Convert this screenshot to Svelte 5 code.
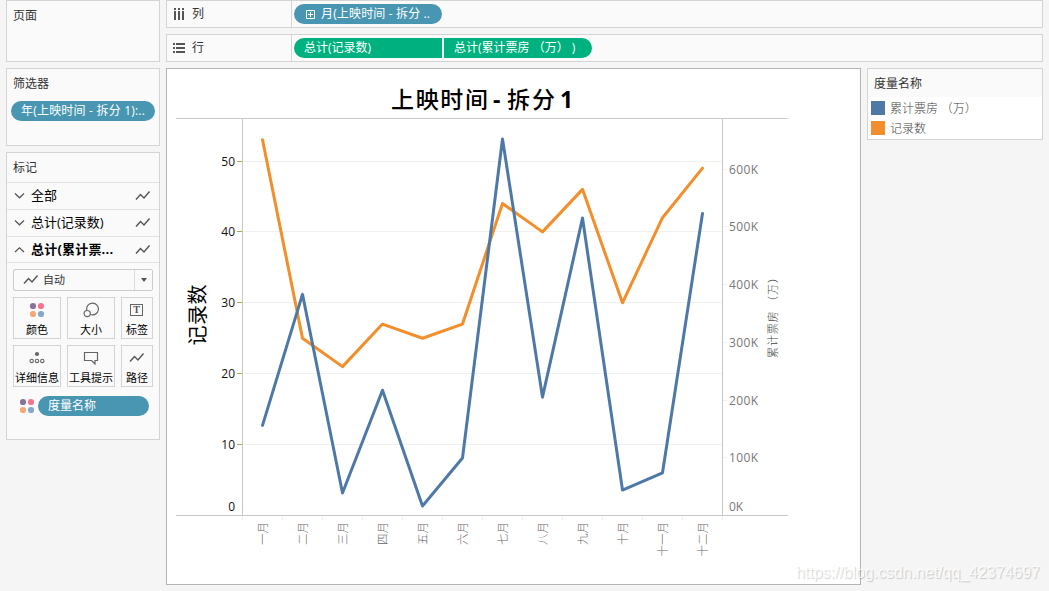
<script>
  // Palette
  const BLUE = '#4e79a7';
  const ORANGE = '#f28e2b';

  const MARKS = [
    { label: '全部', open: false },
    { label: '总计(记录数)', open: false },
    { label: '总计(累计票...', open: true },
  ];

  const BUTTONS = [
    { label: '颜色', icon: 'color' },
    { label: '大小', icon: 'size' },
    { label: '标签', icon: 'label' },
    { label: '详细信息', icon: 'detail' },
    { label: '工具提示', icon: 'tooltip' },
    { label: '路径', icon: 'path' },
  ];

  const LEGEND = [
    { label: '累计票房 （万）', color: BLUE },
    { label: '记录数', color: ORANGE },
  ];

  const DATA = [
    { month: '一月', count: 53, gross: 156 },
    { month: '二月', count: 25, gross: 383 },
    { month: '三月', count: 21, gross: 39 },
    { month: '四月', count: 27, gross: 217 },
    { month: '五月', count: 25, gross: 16.5 },
    { month: '六月', count: 27, gross: 99.5 },
    { month: '七月', count: 44, gross: 652 },
    { month: '八月', count: 40, gross: 205 },
    { month: '九月', count: 46, gross: 515 },
    { month: '十月', count: 30, gross: 44 },
    { month: '十一月', count: 42, gross: 74 },
    { month: '十二月', count: 49, gross: 523 },
  ];

  // Chart geometry, inside the 693x515 view
  const LEFT = 75.5;
  const RIGHT = 555.5;
  const TOP = 49.5;
  const BASE = 446.5;
  const STEP = 40;

  const x = (i) => LEFT + STEP / 2 + i * STEP;
  const yCount = (v) => BASE - v * 7.09;
  const yGross = (v) => BASE - v * 0.5775;
  const snap = (v) => Math.floor(v) + 0.5;

  const countLine = DATA.map((d, i) => `${x(i)},${yCount(d.count)}`).join(' ');
  const grossLine = DATA.map((d, i) => `${x(i)},${yGross(d.gross)}`).join(' ');
  const countTicks = [10, 20, 30, 40, 50];
  const grossTicks = [100, 200, 300, 400, 500, 600];
</script>

{#snippet zigzag()}
  <svg class="zigzag" width="16" height="12" viewBox="0 0 16 12">
    <path d="M1 9.5 L5.5 4.5 L9 8 L14.5 1.5" fill="none" stroke="#555" stroke-width="1.4" />
  </svg>
{/snippet}

{#snippet dots()}
  <svg width="16" height="16" viewBox="0 0 16 16">
    <circle cx="4" cy="4" r="3.1" fill="#8a7199" />
    <circle cx="12" cy="4" r="3.1" fill="#f9748a" />
    <circle cx="4" cy="12" r="3.1" fill="#f7a777" />
    <circle cx="12" cy="12" r="3.1" fill="#84a7cf" />
  </svg>
{/snippet}

<div class="workspace">
  <aside class="side">
    <section class="card pages">
      <h3>页面</h3>
    </section>

    <section class="card filters">
      <h3>筛选器</h3>
      <div class="pill blue filter-pill">年(上映时间 - 拆分 1):..</div>
    </section>

    <section class="card marks">
      <h3>标记</h3>
      {#each MARKS as mark}
        <div class="mark-row" class:open={mark.open}>
          <svg class="chevron" width="12" height="8" viewBox="0 0 12 8">
            <path d={mark.open ? 'M1 6 L5.5 1.8 L10 6' : 'M1 1.5 L5.5 5.8 L10 1.5'} fill="none" stroke="#555" stroke-width="1.2" />
          </svg>
          <span>{mark.label}</span>
          {@render zigzag()}
        </div>
      {/each}

      <div class="marks-body">
        <div class="select">
          {@render zigzag()}
          <span>自动</span>
          <div class="arrow"><i></i></div>
        </div>

        <div class="buttons">
          {#each BUTTONS as button}
            <div class="button">
              <div class="icon">
                {#if button.icon === 'color'}
                  {@render dots()}
                {:else if button.icon === 'size'}
                  <svg width="16" height="16" viewBox="0 0 16 16" fill="none" stroke="#666" stroke-width="1.2">
                    <path d="M3.8 8.4 A5.9 5.9 0 1 1 7.4 12.5" />
                    <circle cx="4.2" cy="11.6" r="3.1" />
                  </svg>
                {:else if button.icon === 'label'}
                  <svg width="14" height="14" viewBox="0 0 14 14">
                    <rect x="0.5" y="1.5" width="12" height="11" fill="none" stroke="#666" />
                    <text x="6.5" y="10.4" text-anchor="middle" class="icon-t">T</text>
                  </svg>
                {:else if button.icon === 'detail'}
                  <svg width="16" height="14" viewBox="0 0 16 14" fill="none" stroke="#666" stroke-width="1.1">
                    <circle cx="8" cy="3" r="2.1" fill="#666" stroke="none" />
                    <circle cx="2.7" cy="9.9" r="1.7" />
                    <circle cx="8" cy="9.9" r="1.7" />
                    <circle cx="13.3" cy="9.9" r="1.7" />
                  </svg>
                {:else if button.icon === 'tooltip'}
                  <svg width="16" height="14" viewBox="0 0 16 14">
                    <path d="M1.5 1.5 H14.5 V9.5 H12 V13 L8.5 9.5 H1.5 Z" fill="none" stroke="#666" stroke-width="1.2" />
                  </svg>
                {:else}
                  {@render zigzag()}
                {/if}
              </div>
              <span>{button.label}</span>
            </div>
          {/each}
        </div>

        <div class="encoding">
          {@render dots()}
          <div class="pill blue">度量名称</div>
        </div>
      </div>
    </section>
  </aside>

  <main class="content">
    <div class="card shelf">
      <div class="shelf-name">
        <svg width="12" height="14" viewBox="0 0 12 14" fill="#555">
          {#each [1, 5, 9] as cx}
            <rect x={cx} y="1" width="2" height="2" />
            <rect x={cx} y="4" width="2" height="9" />
          {/each}
        </svg>
        <span>列</span>
      </div>
      <div class="shelf-pills">
        <div class="pill blue">
          <svg width="9" height="9" viewBox="0 0 9 9" fill="none" stroke="#fff">
            <path d="M0.5 0.5 H8.5 V8.5 H0.5 Z M2 4.5 H7 M4.5 2 V7" />
          </svg>
          <span>月(上映时间 - 拆分 ..</span>
        </div>
      </div>
    </div>

    <div class="card shelf">
      <div class="shelf-name">
        <svg width="12" height="14" viewBox="0 0 12 14" fill="#555">
          {#each [2, 6, 10] as cy}
            <rect x="0" y={cy} width="2" height="2" />
            <rect x="3" y={cy} width="9" height="2" />
          {/each}
        </svg>
        <span>行</span>
      </div>
      <div class="shelf-pills">
        <div class="pill green first">总计(记录数)</div>
        <div class="pill green last">总计(累计票房 （万）<span>)</span></div>
      </div>
    </div>

    <div class="lower">
      <div class="chart">
        <svg width="693" height="515" viewBox="0 0 693 515">
          <text class="title" y="39">
            <tspan x="224" textLength="97">上映时间</tspan>
            <tspan x="326" class="latin">-</tspan>
            <tspan x="340" textLength="48">拆分</tspan>
            <tspan x="393" class="latin">1</tspan>
          </text>

          {#each countTicks as t}
            <line class="grid" x1={LEFT} x2={RIGHT} y1={snap(yCount(t))} y2={snap(yCount(t))} />
            <line class="tick" x1="70" x2="75" y1={snap(yCount(t))} y2={snap(yCount(t))} />
            <text class="count" x="68" y={snap(yCount(t)) + 4.5}>{t}</text>
          {/each}
          <text class="count" x="68" y="442">0</text>

          {#each grossTicks as t}
            <line class="grid" x1={RIGHT} x2="560" y1={snap(yGross(t))} y2={snap(yGross(t))} />
            <text class="gross" x="562" y={snap(yGross(t)) + 4.5} textLength="29">{t}K</text>
          {/each}
          <text class="gross" x="562" y="442">0K</text>

          {#each Array(13) as _, i}
            <line class="grid" x1={LEFT + i * STEP} x2={LEFT + i * STEP} y1="447" y2="451" />
          {/each}

          <line class="axis" x1="9" x2="621" y1={TOP} y2={TOP} />
          <line class="axis" x1="9" x2="621" y1={BASE} y2={BASE} />
          <line class="axis" x1={LEFT} x2={LEFT} y1={TOP} y2={BASE} />
          <line class="axis" x1={RIGHT} x2={RIGHT} y1={TOP} y2={BASE} />

          <polyline class="series" points={countLine} stroke={ORANGE} />
          <polyline class="series" points={grossLine} stroke={BLUE} />

          {#each DATA as d, i}
            <text class="month" transform="translate({x(i) + 4} 453) rotate(-90)">{d.month}</text>
          {/each}

          <text class="count-title" transform="translate(38 276.5) rotate(-90)" textLength="61">记录数</text>
          <text class="gross-title" transform="translate(610 289) rotate(-90)" textLength="86">累计票房 （万）</text>
        </svg>
      </div>

      <section class="card legend">
        <h3>度量名称</h3>
        <ul>
          {#each LEGEND as item}
            <li>
              <i style:background={item.color}></i>
              <span>{item.label}</span>
            </li>
          {/each}
        </ul>
      </section>
    </div>
  </main>

  <div class="watermark">https://blog.csdn.net/qq_42374697</div>
</div>

<style>
  :global(body) {
    background: #f5f5f5;
    overflow: hidden;
  }

  .workspace {
    position: relative;
    box-sizing: border-box;
    width: 1049px;
    height: 591px;
    padding: 0 6px;
    display: flex;
    gap: 6px;
    background: #f5f5f5;
    color: #333;
    font-family: "Open Sans", "Noto Sans CJK SC", sans-serif;
    font-size: 12px;
    line-height: 18px;
  }

  .workspace * {
    box-sizing: border-box;
  }

  svg {
    display: block;
    flex: none;
  }

  .side {
    width: 154px;
    display: flex;
    flex-direction: column;
    gap: 6px;
    flex: none;
  }

  .card {
    background: #fafafa;
    border: 1px solid #d4d4d4;
  }

  h3 {
    margin: 0;
    padding: 6px 6px 0;
    font-size: 12px;
    font-weight: 400;
    line-height: 18px;
  }

  .pages {
    height: 62px;
  }

  .filters {
    height: 78px;
  }

  .marks {
    height: 288px;
  }

  .marks h3 {
    height: 29px;
  }

  .pill {
    display: flex;
    align-items: center;
    height: 20px;
    padding: 0 10px 1px;
    border-radius: 10px;
    color: #fff;
    font-size: 12px;
    white-space: nowrap;
    overflow: hidden;
  }

  .blue {
    background: #4996b2;
  }

  .green {
    background: #00b180;
  }

  .filter-pill {
    width: 144px;
    margin: 8px 0 0 4px;
    letter-spacing: 0.2px;
  }

  .mark-row {
    display: flex;
    align-items: center;
    height: 27px;
    padding: 0 8px 0 7px;
    border-top: 1px solid #e2e2e2;
    color: #000;
    font-size: 13px;
  }

  .mark-row.open {
    border-bottom: 1px solid #e2e2e2;
    font-weight: 700;
  }

  .mark-row span {
    flex: 1;
    margin-left: 5px;
    padding-bottom: 2px;
    white-space: nowrap;
  }

  .mark-row.open span {
    letter-spacing: 0.2px;
  }

  .marks-body {
    padding: 6px 6px 0;
  }

  .select {
    display: flex;
    align-items: center;
    height: 22px;
    padding-left: 9px;
    border: 1px solid #ccc;
    border-radius: 2px;
    font-size: 11px;
  }

  .select span {
    flex: 1;
    margin-left: 4px;
  }

  .arrow {
    display: flex;
    align-items: center;
    justify-content: center;
    width: 18px;
    height: 20px;
    border-left: 1px solid #ddd;
  }

  .arrow i {
    border: 3.5px solid transparent;
    border-top: 4px solid #555;
    border-bottom: 0;
  }

  .buttons {
    display: grid;
    grid-template-columns: 48px 48px 32px;
    grid-auto-rows: 42px;
    gap: 6px;
    margin-top: 6px;
  }

  .button {
    display: flex;
    flex-direction: column;
    align-items: center;
    border: 1px solid #d4d4d4;
    color: #000;
    font-size: 11px;
    white-space: nowrap;
  }

  .icon {
    display: flex;
    align-items: center;
    height: 24px;
  }

  .button span {
    line-height: 16px;
  }

  .icon-t {
    fill: #555;
    font: bold 10px "Liberation Serif", serif;
  }

  .encoding {
    display: flex;
    align-items: center;
    gap: 3px;
    margin-top: 9px;
    padding-left: 6px;
  }

  .encoding .pill {
    width: 111px;
  }

  .content {
    flex: 1;
    display: flex;
    flex-direction: column;
    gap: 6px;
  }

  .shelf {
    display: flex;
    height: 28px;
  }

  .shelf-name {
    display: flex;
    align-items: center;
    gap: 7px;
    width: 125px;
    padding: 0 0 0 6px;
    border-right: 1px solid #d4d4d4;
  }

  .shelf-name svg {
    margin-bottom: 1px;
  }

  .shelf-pills {
    display: flex;
    gap: 2px;
    padding: 3px 0 0 2px;
  }

  .shelf-pills .pill {
    width: 148px;
  }

  .shelf-pills svg {
    margin: 1px 6px 0 2px;
  }

  .shelf-pills svg + span {
    letter-spacing: 0.15px;
  }

  .first {
    border-radius: 10px 0 0 10px;
  }

  .last {
    border-radius: 0 10px 10px 0;
  }

  .last span {
    margin-left: 3px;
  }

  .lower {
    display: flex;
    align-items: flex-start;
    gap: 6px;
  }

  .chart {
    width: 695px;
    height: 517px;
    border: 1px solid #b4b4b4;
    background: #fff;
  }

  .legend {
    width: 176px;
    height: 72px;
  }

  .legend h3 {
    height: 28px;
  }

  .legend ul {
    margin: 0;
    padding: 2px 3px 0;
    height: 42px;
    list-style: none;
    background: #fff;
  }

  .legend li {
    display: flex;
    align-items: center;
    gap: 5px;
    height: 20px;
    color: #444;
    font-family: "Noto Sans CJK SC", sans-serif;
    font-weight: 300;
    white-space: nowrap;
  }

  .legend i {
    width: 14px;
    height: 14px;
    margin-bottom: 2px;
  }

  .legend li span {
    padding-bottom: 2px;
  }

  .title {
    fill: #000;
    font-family: "Noto Sans CJK SC", sans-serif;
    font-size: 23px;
    font-weight: 500;
  }

  .latin {
    font-family: "Open Sans", sans-serif;
    font-weight: 700;
  }

  .grid {
    stroke: #f0f0f0;
  }

  .tick {
    stroke: #b5a642;
  }

  .axis {
    stroke: #c8c8c8;
  }

  .series {
    fill: none;
    stroke-width: 3;
    stroke-linecap: round;
    stroke-linejoin: round;
  }

  .count {
    fill: #111;
    font-size: 12px;
    text-anchor: end;
  }

  .gross {
    fill: #777;
    font-size: 12px;
  }

  .month {
    fill: #666;
    font-family: "Noto Sans CJK SC", sans-serif;
    font-size: 11.5px;
    font-weight: 300;
    text-anchor: end;
  }

  .count-title {
    fill: #000;
    font-family: "Noto Sans CJK SC", sans-serif;
    font-size: 20px;
  }

  .gross-title {
    fill: #444;
    font-family: "Noto Sans CJK SC", sans-serif;
    font-size: 11px;
    font-weight: 300;
  }

  .watermark {
    position: absolute;
    left: 796px;
    top: 563px;
    color: rgba(255, 255, 255, 0.8);
    font: 16px/20px "Liberation Sans", sans-serif;
    letter-spacing: -0.05px;
    text-shadow: 1px 1px 1px rgba(0, 0, 0, 0.18);
    white-space: nowrap;
  }
</style>
